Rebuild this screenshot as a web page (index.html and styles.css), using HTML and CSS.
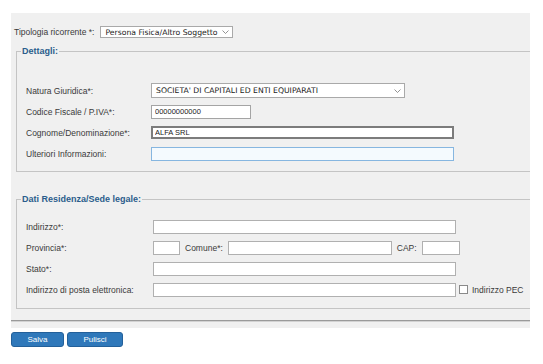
FILE: index.html
```html
<!DOCTYPE html>
<html lang="it">
<head>
    <meta charset="UTF-8">
    <meta name="viewport" content="width=device-width, initial-scale=1.0">
    <title>Ricorrente</title>
    <link rel="stylesheet" href="styles.css">
</head>
<body>
    <div class="panel">
        <div class="top-row">
            <span class="label-top">Tipologia ricorrente *:</span>
            <div class="select select-tipo">
                <span>Persona Fisica/Altro Soggetto</span>
                <svg width="7" height="4" viewBox="0 0 7 4"><path d="M0.5 0.5 L3.5 3.5 L6.5 0.5" fill="none" stroke="#777" stroke-width="0.8"/></svg>
            </div>
        </div>

        <fieldset class="box dettagli">
            <legend>Dettagli:</legend>
            <div class="row">
                <span class="label">Natura Giuridica*:</span>
                <div class="select select-natura">
                    <span>SOCIETA' DI CAPITALI ED ENTI EQUIPARATI</span>
                    <svg width="7" height="4" viewBox="0 0 7 4"><path d="M0.5 0.5 L3.5 3.5 L6.5 0.5" fill="none" stroke="#777" stroke-width="0.8"/></svg>
                </div>
            </div>
            <div class="row">
                <span class="label">Codice Fiscale / P.IVA*:</span>
                <input type="text" class="field field-cf" value="00000000000">
            </div>
            <div class="row">
                <span class="label">Cognome/Denominazione*:</span>
                <input type="text" class="field field-wide field-dark" value="ALFA SRL">
            </div>
            <div class="row">
                <span class="label">Ulteriori Informazioni:</span>
                <input type="text" class="field field-wide field-focus">
            </div>
        </fieldset>

        <fieldset class="box residenza">
            <legend>Dati Residenza/Sede legale:</legend>
            <div class="row">
                <span class="label">Indirizzo*:</span>
                <input type="text" class="field field-wide">
            </div>
            <div class="row">
                <span class="label">Provincia*:</span>
                <input type="text" class="field field-prov">
                <span class="inline-label">Comune*:</span>
                <input type="text" class="field field-comune">
                <span class="inline-label">CAP:</span>
                <input type="text" class="field field-cap">
            </div>
            <div class="row">
                <span class="label">Stato*:</span>
                <input type="text" class="field field-wide">
            </div>
            <div class="row">
                <span class="label">Indirizzo di posta elettronica:</span>
                <input type="text" class="field field-wide">
                <input type="checkbox" class="check">
                <span class="check-label">Indirizzo PEC</span>
            </div>
        </fieldset>

        <div class="divider"></div>
    </div>

    <div class="actions">
        <button class="btn btn-salva">Salva</button>
        <button class="btn btn-pulisci">Pulisci</button>
    </div>
</body>
</html>
```

FILE: styles.css
```css
* {
    box-sizing: border-box;
}

body {
    margin: 0;
    background-color: #fff;
    font-family: "Liberation Sans", Arial, sans-serif;
    font-size: 8.5px;
    color: #3a3a3a;
}

.panel {
    margin: 13px 0 0 11px;
    width: 519px;
    background-color: #f0f0f0;
    padding: 13px 0 6px 0;
}

.top-row {
    display: flex;
    align-items: center;
    height: 12px;
    padding-left: 3px;
}

.label-top {
    margin-right: 6px;
}

/* fake select boxes */
.select {
    display: flex;
    align-items: center;
    justify-content: space-between;
    background-color: #fff;
    border: 1px solid #a9a9a9;
    font-family: "DejaVu Sans", Verdana, sans-serif;
    font-size: 7.7px;
    color: #222;
    padding: 0 3px 0 4px;
}

.select-tipo {
    width: 133px;
    height: 12px;
}

.select-natura {
    width: 254px;
    height: 15px;
}

/* fieldsets */
.box {
    margin: 8px 0 0 5px;
    padding: 27px 0 10px 4px;
    border: 1px solid #c4c4c4;
    border-right: none;
    min-width: 0;
}

.box legend {
    font-size: 9px;
    line-height: 10px;
    font-weight: bold;
    color: #2b5d8c;
    padding: 0 1px;
}

.residenza {
    margin-top: 22px;
    padding-top: 15px;
    padding-bottom: 11px;
}

.row {
    display: flex;
    align-items: center;
    height: 15px;
    margin-left: 5px;
    margin-bottom: 6px;
}

.row:last-child {
    margin-bottom: 0;
}

.dettagli .label {
    width: 125px;
}

.residenza .label {
    width: 127px;
}

/* inputs */
.field {
    height: 14px;
    margin: 0;
    padding: 0 3px;
    border: 1px solid #b0b0b0;
    background-color: #fff;
    font-family: "Liberation Sans", Arial, sans-serif;
    font-size: 7.5px;
    color: #222;
    outline: none;
}

.field-cf {
    width: 100px;
    border-color: #a4a4a4;
}

.field-wide {
    width: 303px;
}

.field-dark {
    height: 13px;
    border: 2px solid #7c7c7c;
    padding-left: 2px;
}

.field-focus {
    border-color: #86b6e0;
    background-color: #f4fafe;
}

.field-prov {
    width: 27px;
}

.field-comune {
    width: 164px;
}

.field-cap {
    width: 38px;
}

.inline-label {
    margin: 0 5px;
}

.check {
    appearance: none;
    width: 9px;
    height: 9px;
    margin: 0 4px 0 3px;
    border: 1px solid #8a8a8a;
    background-color: #fff;
}

.divider {
    margin-top: 11px;
    border-top: 1px solid #9a9a9a;
    border-bottom: 1px solid #d2d2d2;
}

/* buttons */
.actions {
    display: flex;
    gap: 3px;
    margin: 4px 0 0 11px;
}

.btn {
    height: 15px;
    padding: 0;
    border: 1px solid #23609a;
    border-radius: 3px;
    background-color: #2f78ba;
    color: #fff;
    font-family: "Liberation Sans", Arial, sans-serif;
    font-size: 8px;
    cursor: pointer;
}

.btn-salva {
    width: 53px;
}

.btn-pulisci {
    width: 56px;
}
```
